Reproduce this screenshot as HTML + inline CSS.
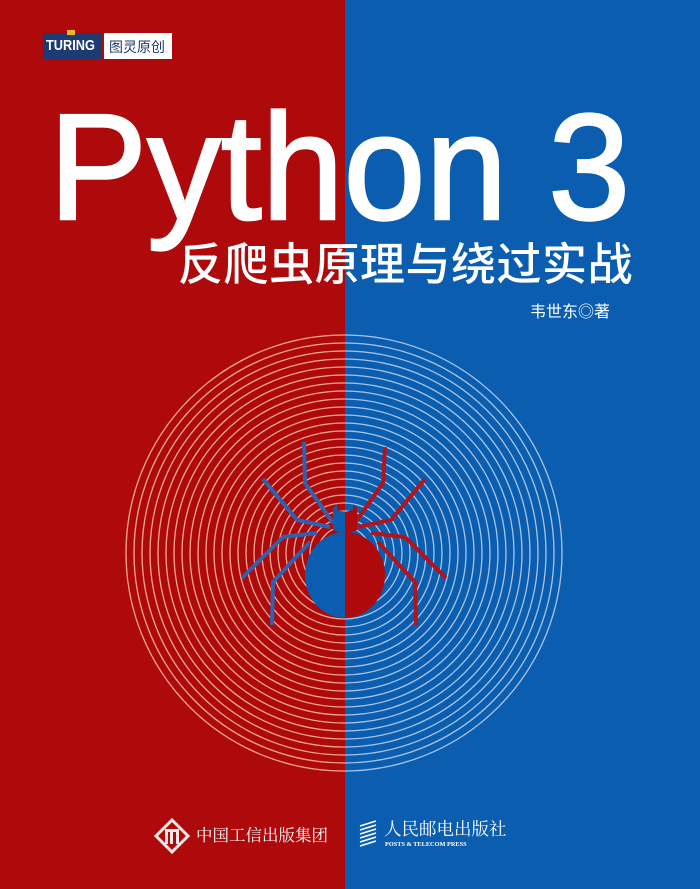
<!DOCTYPE html>
<html><head><meta charset="utf-8"><style>
html,body{margin:0;padding:0}
body{width:700px;height:889px;position:relative;overflow:hidden;background:#ae0a0c;font-family:"Liberation Sans","Noto Sans CJK SC",sans-serif}
.blue{position:absolute;left:345px;top:0;width:355px;height:889px;background:#0b5db0}
.t{position:absolute;color:#fff;white-space:nowrap}
</style></head><body>
<div class="blue"></div>
<div style="position:absolute;left:43px;top:33px;width:58px;height:26px;background:#1d3b72"></div>
<div class="t" style="left:46px;top:37px;font:bold 15px 'Liberation Sans',sans-serif;transform:scaleX(0.85);transform-origin:left">TURING</div>
<div style="position:absolute;left:67px;top:30px;width:8px;height:5px;background:#e8b82a"></div>
<div style="position:absolute;left:104px;top:33px;width:68px;height:26px;background:#fff"></div>
<div class="t" style="left:109px;top:37px;font-size:14px;color:#1d3b72;font-family:'Noto Sans CJK SC',sans-serif">图灵原创</div>

<div class="t" style="left:49px;top:77px;font-size:151px;line-height:180px;transform:scaleX(0.975);transform-origin:left;-webkit-text-stroke:2.5px #fff">Python 3</div>
<div class="t" style="left:178px;top:233px;font-size:45px;line-height:56px;font-family:'Noto Sans CJK SC',sans-serif;font-weight:500;letter-spacing:0.5px">反爬虫原理与绕过实战</div>
<div class="t" style="left:530px;top:300px;font-size:16px;line-height:20px;font-family:'Noto Sans CJK SC',sans-serif">韦世东◎著</div>

<svg style="position:absolute;left:0;top:0" width="700" height="889">
<defs>
<clipPath id="L"><rect x="0" y="0" width="345" height="889"/></clipPath>
<clipPath id="R"><rect x="345" y="0" width="355" height="889"/></clipPath>
</defs>
<g fill="none" stroke-width="1.3">
<g clip-path="url(#L)" stroke="#f2a98c" id="rl"></g>
<g clip-path="url(#R)" stroke="#a9c4e8" id="rr"></g>
</g>
<g fill="none" stroke-width="4" stroke-linejoin="miter">
<g stroke="#2e62b0">
<polyline points="333,523 305,483 304,442"/>
<polyline points="330,527 297,520 263,479"/>
<polyline points="317,533 283,537 242,578"/>
<polyline points="310,542 273,582 272,625"/>
</g>
<g stroke="#b3141c">
<polyline points="355,523 383,483 385,447"/>
<polyline points="358,527 391,520 425,479"/>
<polyline points="371,533 405,537 446,578"/>
<polyline points="378,542 415,582 416,625"/>
</g>
</g>
<g clip-path="url(#L)" fill="#0b5db0">
<ellipse cx="345" cy="575" rx="40" ry="43"/>
<path d="M333,530 L333,508 L337,504 L337,510 L345,512 L345,535 Z"/>
</g>
<g clip-path="url(#R)" fill="#ae0a0c">
<ellipse cx="345" cy="575" rx="40" ry="43"/>
<path d="M357,530 L357,508 L353,504 L353,510 L345,512 L345,535 Z"/>
</g>
<g fill="#fff" opacity="0.9">
<path d="M172,820 L188,836 L172,852 L156,836 Z" fill="none" stroke="#fff" stroke-width="3"/>
<rect x="165" y="829" width="14" height="3"/><rect x="165" y="829" width="3" height="15"/><rect x="176" y="829" width="3" height="15"/><rect x="170" y="832" width="3" height="12"/>
</g>
<g stroke="#fff" stroke-width="1.5">
<line x1="360" y1="826" x2="376" y2="821"/><line x1="360" y1="830" x2="376" y2="825"/><line x1="360" y1="834" x2="376" y2="829"/><line x1="360" y1="838" x2="376" y2="833"/><line x1="360" y1="842" x2="376" y2="837"/><line x1="360" y1="846" x2="376" y2="841"/>
</g>
</svg>
<div class="t" style="left:196px;top:823px;font-size:16.5px;line-height:22px;font-family:'Noto Serif CJK SC',serif">中国工信出版集团</div>
<div class="t" style="left:384px;top:818px;font-size:17.5px;line-height:22px;font-family:'Noto Serif CJK SC',serif">人民邮电出版社</div>
<div class="t" style="left:385px;top:841px;font:bold 6.3px 'Liberation Serif',serif">POSTS &amp; TELECOM PRESS</div>
<script>
var ns="http://www.w3.org/2000/svg";
["rl","rr"].forEach(function(id){var g=document.getElementById(id);for(var r=10;r<=218;r+=8){var c=document.createElementNS(ns,"circle");c.setAttribute("cx",344);c.setAttribute("cy",553);c.setAttribute("r",r);g.appendChild(c);}});
</script>
</body></html>
